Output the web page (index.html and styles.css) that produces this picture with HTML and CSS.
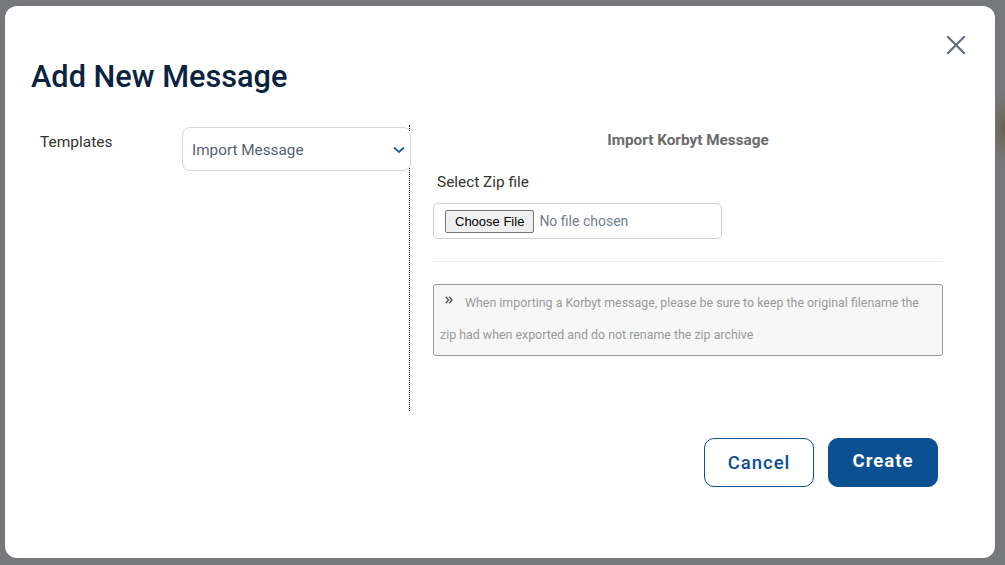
FILE: index.html
```html
<!DOCTYPE html>
<html lang="en">
<head>
<meta charset="utf-8">
<title>Add New Message</title>
<link rel="stylesheet" href="styles.css">
</head>
<body>
<div class="backdrop">
  <div class="modal">
    <div class="modal-header">
      <button class="close-btn" aria-label="Close">
        <svg width="18" height="18" viewBox="0 0 18 18"><path d="M1 1 L17 17 M17 1 L1 17" stroke="#5e6e7e" stroke-width="2.2" stroke-linecap="square"/></svg>
      </button>
      <h1 class="modal-title">Add New Message</h1>
    </div>
    <div class="modal-body">
      <div class="col-left">
        <label class="field-label">Templates</label>
        <div class="select">
          <span class="select-value">Import Message</span>
          <svg class="chevron" width="12" height="8" viewBox="0 0 12 8"><path d="M1 1.5 L6 6 L11 1.5" fill="none" stroke="#1d5fa6" stroke-width="1.8"/></svg>
        </div>
      </div>
      <div class="col-right">
        <h2 class="import-title">Import Korbyt Message</h2>
        <label class="zip-label">Select Zip file</label>
        <div class="file-box">
          <input type="file" class="file-input" accept=".zip">
        </div>
        <hr class="divider">
        <div class="note">
          <svg class="note-mark" width="8" height="8" viewBox="0 0 8 8"><path d="M0.8 0.8 L3.6 4 L0.8 7.2 M4.2 0.8 L7 4 L4.2 7.2" fill="none" stroke="#505050" stroke-width="1.3"/></svg>
          <span class="note-text">When importing a Korbyt message, please be sure to keep the original filename the zip had when exported and do not rename the zip archive</span>
        </div>
      </div>
    </div>
    <div class="modal-footer">
      <button class="btn btn-outline">Cancel</button>
      <button class="btn btn-primary">Create</button>
    </div>
  </div>
</div>
</body>
</html>
```
FILE: styles.css
```css
html, body {
  margin: 0;
  padding: 0;
}

body {
  width: 1005px;
  height: 565px;
  overflow: hidden;
  font-family: Roboto, "Liberation Sans", Arial, sans-serif;
  background:
    radial-gradient(ellipse 14px 36px at 1004px 128px, #6a6450 0%, rgba(106,100,80,0) 100%),
    #77787b;
}

.backdrop {
  padding: 6px 10px 7px 5px;
}

.modal {
  width: 990px;
  height: 552px;
  background: #fff;
  border-radius: 12px;
  box-sizing: border-box;
  padding: 30px 30px 0 26px;
  display: flex;
  flex-direction: column;
}

.modal-header {
  display: flex;
  flex-direction: column;
}

.close-btn {
  align-self: flex-end;
  width: 18px;
  height: 18px;
  padding: 0;
  margin: 0;
  border: 0;
  background: none;
  display: block;
  cursor: pointer;
}

.close-btn svg {
  display: block;
}

.modal-title {
  margin: 6px 0 0 0;
  font-size: 30.7px;
  line-height: 34px;
  font-weight: 500;
  color: #0c2340;
}

.modal-body {
  display: flex;
  margin-top: 31px;
  height: 286px;
}

.col-left {
  width: 379px;
  flex: none;
  box-sizing: border-box;
  border-right: 1px dotted #000;
  display: flex;
  align-items: flex-start;
}

.field-label {
  width: 151px;
  flex: none;
  box-sizing: border-box;
  padding: 7px 0 0 9px;
  font-size: 15.5px;
  line-height: 20px;
  color: #333;
}

.select {
  margin-top: 2px;
  width: 229px;
  height: 44px;
  flex: none;
  margin-right: -2px;
  box-sizing: border-box;
  border: 1px solid #d6d6d6;
  border-radius: 8px;
  background: #fff;
  display: flex;
  align-items: center;
  justify-content: space-between;
  padding: 0 5px 0 9px;
  position: relative;
  z-index: 1;
}

.select-value {
  font-size: 15.3px;
  color: #566374;
  line-height: 20px;
  padding-top: 1px;
}

.chevron {
  display: block;
  margin-top: 1px;
}

.col-right {
  flex: none;
  width: 510px;
  padding: 5px 0 0 23px;
  display: flex;
  flex-direction: column;
}

.import-title {
  margin: 0;
  font-size: 15.3px;
  line-height: 20px;
  font-weight: 700;
  color: #6b6b6b;
  text-align: center;
}

.zip-label {
  margin-top: 22px;
  padding-left: 4px;
  font-size: 15.4px;
  line-height: 20px;
  color: #333;
}

.file-box {
  margin-top: 11px;
  width: 289px;
  height: 36px;
  box-sizing: border-box;
  border: 1px solid #cfcfcf;
  border-radius: 5px;
  display: flex;
  align-items: center;
  padding-left: 11px;
}

.file-input {
  font-family: Roboto, sans-serif;
  font-size: 14px;
  color: #6f7e8e;
  width: 270px;
}

.file-input::file-selector-button {
  font-family: "Liberation Sans", Arial, sans-serif;
  font-size: 13px;
  color: #000;
  background: #efefef;
  border: 1px solid #767676;
  border-radius: 2px;
  padding: 3px 9px;
  margin-right: 5px;
}

.divider {
  margin: 22px 0 0 0;
  border: 0;
  border-top: 1px solid #ececec;
  height: 0;
}

.note {
  margin-top: 22px;
  box-sizing: border-box;
  height: 72px;
  border: 1px solid #9a9a9a;
  border-radius: 3px;
  background: #f7f7f7;
  padding: 2px 7px 4px 6px;
  font-size: 12.4px;
  line-height: 32px;
  color: #9a9a9a;
}

.note-mark {
  float: left;
  display: block;
  margin: 9px 12px 0 5px;
}

.modal-footer {
  display: flex;
  justify-content: flex-end;
  gap: 14px;
  margin-top: 27px;
  padding-right: 27px;
}

.btn {
  width: 110px;
  height: 49px;
  box-sizing: border-box;
  border-radius: 10px;
  font-family: Roboto, sans-serif;
  font-size: 18.5px;
  font-weight: 500;
  letter-spacing: 1px;
  cursor: pointer;
}

.btn-outline {
  background: #fff;
  border: 1px solid #0b5096;
  color: #0b5096;
}

.btn-primary {
  background: #0b5093;
  border: 1px solid #0b5093;
  color: #fff;
  font-weight: 700;
  padding-bottom: 4px;
}
```
